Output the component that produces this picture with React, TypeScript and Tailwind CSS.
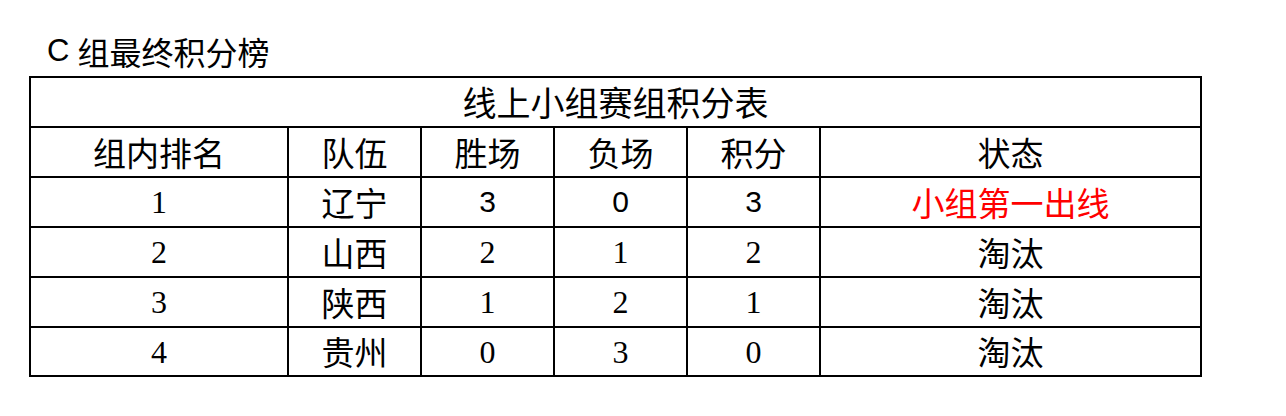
import React from "react";

const cjk = "font-['Noto_Sans_CJK_SC',sans-serif]";
const serifNum = "font-['Liberation_Serif','Noto_Sans_CJK_SC',serif]";
const sansNum = "font-['Liberation_Sans','Noto_Sans_CJK_SC',sans-serif]";

type Cell = { t: string; f: "cjk" | "serif" | "sans"; red?: boolean };

const rows: Cell[][] = [
  [
    { t: "1", f: "serif" },
    { t: "辽宁", f: "cjk" },
    { t: "3", f: "sans" },
    { t: "0", f: "sans" },
    { t: "3", f: "sans" },
    { t: "小组第一出线", f: "cjk", red: true },
  ],
  [
    { t: "2", f: "serif" },
    { t: "山西", f: "cjk" },
    { t: "2", f: "serif" },
    { t: "1", f: "serif" },
    { t: "2", f: "serif" },
    { t: "淘汰", f: "cjk" },
  ],
  [
    { t: "3", f: "serif" },
    { t: "陕西", f: "cjk" },
    { t: "1", f: "serif" },
    { t: "2", f: "serif" },
    { t: "1", f: "serif" },
    { t: "淘汰", f: "cjk" },
  ],
  [
    { t: "4", f: "serif" },
    { t: "贵州", f: "cjk" },
    { t: "0", f: "serif" },
    { t: "3", f: "serif" },
    { t: "0", f: "serif" },
    { t: "淘汰", f: "cjk" },
  ],
];

const headers = ["组内排名", "队伍", "胜场", "负场", "积分", "状态"];

function fontClass(f: Cell["f"]) {
  if (f === "serif") return `${serifNum} text-[32px]`;
  if (f === "sans") return `${sansNum} text-[30px]`;
  return `${cjk} text-[33px]`;
}

export default function App() {
  return (
    <div className="w-[1286px] h-[416px] bg-white text-black">
      <div className="pl-[47px] pt-[31px] h-[71px] mb-[5px]">
        <div className={`h-[40px] leading-[40px] text-[32px] ${cjk} flex items-center`}>
          <span className="font-['Liberation_Sans',sans-serif] text-[31px]">C</span>
          <span className="ml-[8px]">组最终积分榜</span>
        </div>
      </div>
      <div className="ml-[29px] w-[1173px] bg-black p-[2px] grid grid-cols-[256px_131px_131px_131px_131px_379px] grid-rows-[48px_48px_48px_48px_48px_47px] gap-[2px]">
        <div className={`col-span-6 bg-white flex items-center justify-center ${cjk} text-[34px] leading-none`}>
          线上小组赛组积分表
        </div>
        {headers.map((h) => (
          <div key={h} className={`bg-white flex items-center justify-center ${cjk} text-[33px] leading-none`}>
            {h}
          </div>
        ))}
        {rows.map((r, i) =>
          r.map((c, j) => (
            <div
              key={`${i}-${j}`}
              className={`bg-white flex items-center justify-center leading-none ${fontClass(c.f)} ${c.red ? "text-[#ff0000]" : "text-black"}`}
            >
              {c.t}
            </div>
          ))
        )}
      </div>
    </div>
  );
}
